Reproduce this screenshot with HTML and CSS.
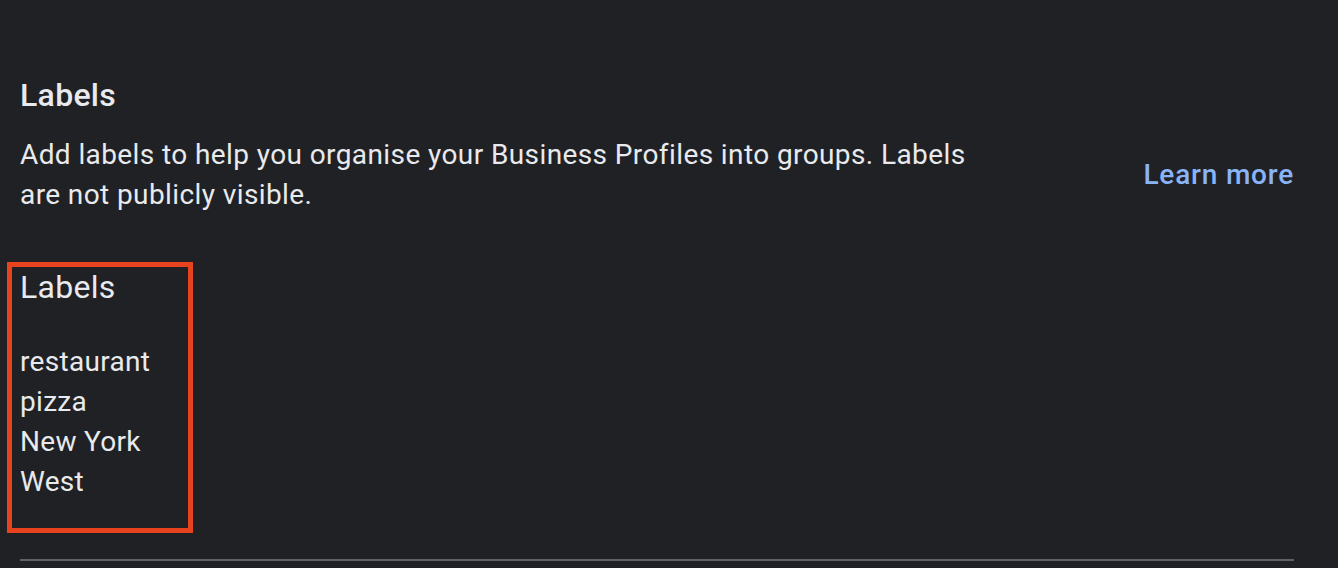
FILE: index.html
```html
<!DOCTYPE html>
<html lang="en">
<head>
<meta charset="utf-8">
<title>Labels</title>
<link rel="stylesheet" href="styles.css">
</head>
<body>
<main class="page">
  <h2 class="title">Labels</h2>
  <div class="intro">
    <p class="desc">Add labels to help you organise your Business Profiles into groups. Labels are not publicly visible.</p>
    <a class="learn" href="#">Learn more</a>
  </div>
  <section class="labels-box">
    <h3 class="labels-head">Labels</h3>
    <ul class="labels-list">
      <li>restaurant</li>
      <li>pizza</li>
      <li>New York</li>
      <li>West</li>
    </ul>
  </section>
  <hr class="divider">
</main>
</body>
</html>
```
FILE: styles.css
```css
html, body {
  margin: 0;
  padding: 0;
  background: #202124;
}
body {
  font-family: Roboto, "Liberation Sans", sans-serif;
  color: #e8eaed;
}
.page {
  padding: 75px 44px 0 20px;
  height: 568px;
  box-sizing: border-box;
  overflow: hidden;
}
.title {
  margin: 0;
  font-size: 32px;
  line-height: 40px;
  font-weight: 500;
  letter-spacing: 0.3px;
}
.intro {
  margin-top: 20px;
  display: flex;
  align-items: center;
  justify-content: space-between;
}
.desc {
  margin: 0;
  max-width: 975px;
  font-size: 28px;
  line-height: 40px;
  letter-spacing: 0.4px;
}
.learn {
  color: #8ab4f8;
  text-decoration: none;
  font-size: 28px;
  line-height: 40px;
  font-weight: 500;
  letter-spacing: 0.8px;
}
.labels-box {
  margin: 47px 0 0 -13px;
  width: 186px;
  box-sizing: border-box;
  border: 5px solid #e8421f;
  padding: 0 0 26px 8px;
}
.labels-head {
  margin: 0;
  font-size: 32px;
  line-height: 40px;
  font-weight: 400;
  letter-spacing: 0.3px;
}
.labels-list {
  list-style: none;
  margin: 35px 0 0;
  padding: 0;
  font-size: 28px;
  line-height: 40px;
  letter-spacing: 0.3px;
}
.divider {
  margin: 26px 0 0;
  border: 0;
  height: 2px;
  background: #5f6368;
}
```
